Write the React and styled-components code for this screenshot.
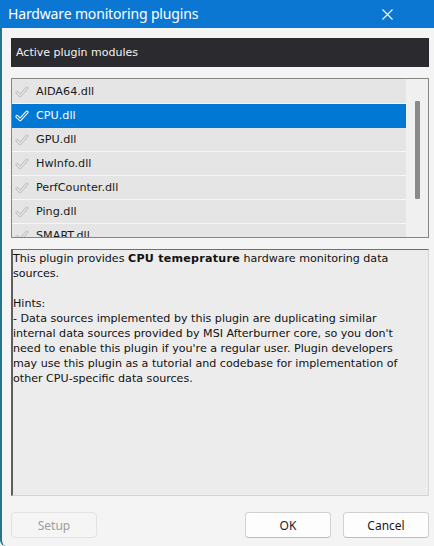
import React from "react";
import styled, { createGlobalStyle } from "styled-components";

const Global = createGlobalStyle`
  html, body { margin: 0; padding: 0; background: #f4f4f4; }
  #root { width: 434px; height: 546px; }
`;

const Window = styled.div`
  width: 434px;
  height: 546px;
  display: flex;
  flex-direction: column;
  background: #f4f4f4;
  overflow: hidden;
`;

const TitleBar = styled.div`
  height: 28px;
  flex: 0 0 28px;
  background: #0b77d2;
  display: flex;
  align-items: center;
  justify-content: space-between;
  padding: 0 41px 0 8px;
  color: #fff;
  font-family: "Noto Sans", "Open Sans", sans-serif;
  font-size: 14px;
  letter-spacing: -0.15px;
  box-sizing: border-box;
`;

const TitleText = styled.span`
  position: relative;
  top: -1px;
`;

const CloseIcon = styled.svg`
  width: 11px;
  height: 11px;
  display: block;
`;

const Body = styled.div`
  flex: 1;
  display: flex;
  flex-direction: column;
  padding: 10px 5px 9px 9px;
  border-left: 2px solid #23758f;
  border-bottom-left-radius: 6px;
  min-height: 0;
`;

const SectionHeader = styled.div`
  height: 29px;
  flex: 0 0 29px;
  background: #2b2b2f;
  color: #f2f2f2;
  font-family: "DejaVu Sans", "Liberation Sans", sans-serif;
  font-size: 11px;
  display: flex;
  align-items: center;
  padding-left: 5px;
  box-sizing: border-box;
`;

const ListBox = styled.div`
  margin-top: 11px;
  height: 160px;
  flex: 0 0 160px;
  border: 1px solid #858585;
  box-sizing: border-box;
  display: flex;
  background: #f0f0f0;
  overflow: hidden;
`;

const Rows = styled.div`
  width: 394px;
  display: flex;
  flex-direction: column;
  padding-top: 1px;
  background: #e6e6e6;
`;

const Row = styled.div`
  height: 23px;
  flex: 0 0 23px;
  border-bottom: 1px solid ${(p) => (p.$selected ? "#0078d4" : "#f7f7f7")};
  background: ${(p) => (p.$selected ? "#0078d4" : "#e5e5e5")};
  color: ${(p) => (p.$selected ? "#ffffff" : "#1a1a1a")};
  display: flex;
  align-items: center;
  font-family: "DejaVu Sans", "Liberation Sans", sans-serif;
  font-size: 11.2px;
  gap: 7px;
  padding-left: 3px;
`;

const CheckSvg = styled.svg`
  width: 14px;
  height: 12px;
  display: block;
  flex: 0 0 14px;
`;

const ScrollTrack = styled.div`
  flex: 1;
  display: flex;
  justify-content: center;
  padding-top: 22px;
  padding-left: 1px;
`;

const Thumb = styled.div`
  width: 5px;
  height: 98px;
  background: #8a8a8a;
  border-radius: 1px;
`;

const Description = styled.div`
  margin-top: 11px;
  flex: 0 0 247px;
  height: 247px;
  box-sizing: border-box;
  background: #ececec;
  border-top: 1px solid #6f6f6f;
  border-left: 2px solid #5f5f5f;
  border-right: 1px solid #d4d4d4;
  border-bottom: 1px solid #d4d4d4;
  padding: 1px 0 0 0;
  color: #111;
  font-family: "DejaVu Sans", "Liberation Sans", sans-serif;
  font-size: 11.1px;
  line-height: 15px;
  white-space: pre-line;
`;

const Strong = styled.b`
  font-weight: bold;
  letter-spacing: 0.25px;
`;

const Buttons = styled.div`
  margin-top: 16px;
  display: flex;
  align-items: center;
  gap: 12px;
`;

const Spacer = styled.div`
  flex: 1;
`;

const Button = styled.button`
  width: 86px;
  height: 26px;
  box-sizing: border-box;
  border-radius: 4px;
  border: 1px solid ${(p) => (p.disabled ? "#e2e2e2" : "#d0d0d0")};
  border-bottom-color: ${(p) => (p.disabled ? "#e2e2e2" : "#bdbdbd")};
  background: ${(p) => (p.disabled ? "#f5f5f5" : "#fdfdfd")};
  color: ${(p) => (p.disabled ? "#9e9e9e" : "#1b1b1b")};
  font-family: "Noto Sans", "Open Sans", sans-serif;
  font-size: 12px;
  padding: 0;
  cursor: default;
`;

function Check({ selected }) {
  const outer = selected ? "#ffffff" : "#c4c4c4";
  const inner = selected ? "#0078d4" : "#e5e5e5";
  const d = "M2 6.5 L5.2 9.6 L12 2.2";
  return (
    <CheckSvg viewBox="0 0 14 12">
      <path d={d} fill="none" stroke={outer} strokeWidth="3.2" strokeLinecap="round" strokeLinejoin="round" />
      <path d={d} fill="none" stroke={inner} strokeWidth="1.2" strokeLinecap="round" strokeLinejoin="round" />
    </CheckSvg>
  );
}

const plugins = ["AIDA64.dll", "CPU.dll", "GPU.dll", "HwInfo.dll", "PerfCounter.dll", "Ping.dll", "SMART.dll"];

export default function App() {
  return (
    <>
      <Global />
      <Window>
        <TitleBar>
          <TitleText>Hardware monitoring plugins</TitleText>
          <CloseIcon viewBox="0 0 11 11">
            <path d="M0.5 0.5 L10.5 10.5 M10.5 0.5 L0.5 10.5" stroke="#fff" strokeWidth="1.1" />
          </CloseIcon>
        </TitleBar>
        <Body>
          <SectionHeader>Active plugin modules</SectionHeader>
          <ListBox>
            <Rows>
              {plugins.map((p) => (
                <Row key={p} $selected={p === "CPU.dll"}>
                  <Check selected={p === "CPU.dll"} />
                  <span>{p}</span>
                </Row>
              ))}
            </Rows>
            <ScrollTrack>
              <Thumb />
            </ScrollTrack>
          </ListBox>
          <Description>
            This plugin provides <Strong>CPU temeprature</Strong> hardware monitoring data{"\n"}sources.{"\n"}{"\n"}Hints:{"\n"}- Data sources implemented by this plugin are duplicating similar{"\n"}internal data sources provided by MSI Afterburner core, so you don't{"\n"}need to enable this plugin if you're a regular user. Plugin developers{"\n"}may use this plugin as a tutorial and codebase for implementation of{"\n"}other CPU-specific data sources.
          </Description>
          <Buttons>
            <Button disabled>Setup</Button>
            <Spacer />
            <Button>OK</Button>
            <Button>Cancel</Button>
          </Buttons>
        </Body>
      </Window>
    </>
  );
}
